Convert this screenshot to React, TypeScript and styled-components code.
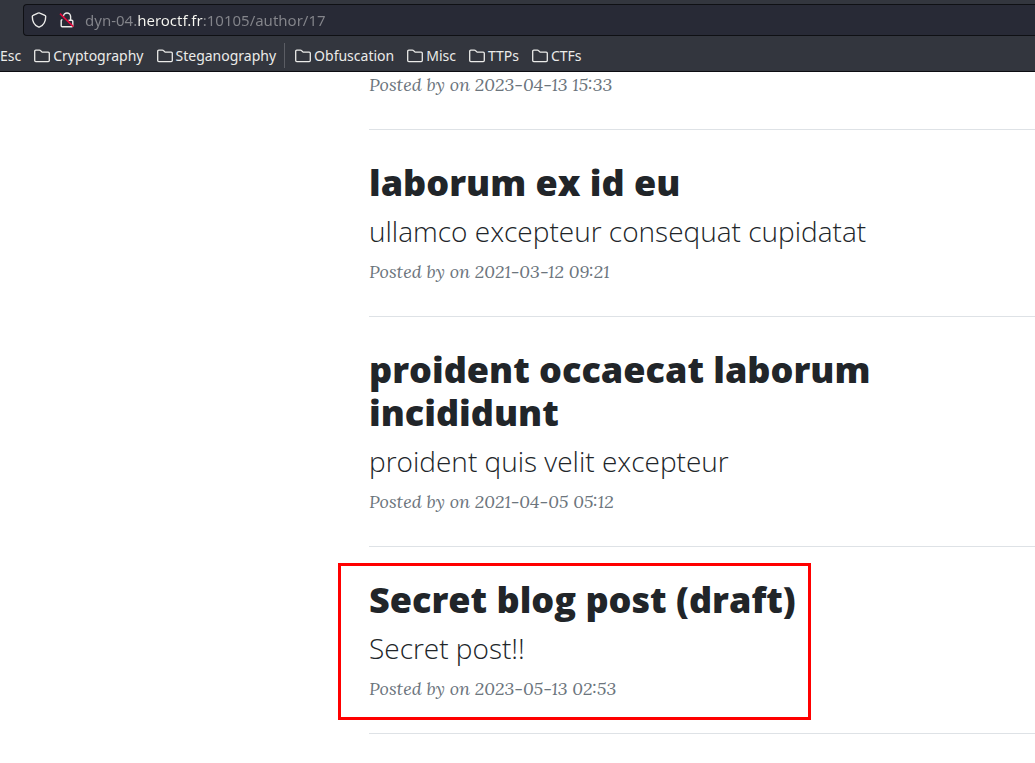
import React from "react";
import styled, { createGlobalStyle } from "styled-components";

const GlobalStyle = createGlobalStyle`
  *, *::before, *::after { box-sizing: border-box; }
  body {
    margin: 0;
    background: #fff;
    color: #212529;
    font-family: "Open Sans", "Noto Sans", sans-serif;
    overflow-x: hidden;
  }
`;

const BrowserBar = styled.header`
  background: #33363e;
  border-bottom: 1px solid #0c0c12;
  padding-top: 4px;
  font-family: "Noto Sans", sans-serif;
  overflow: hidden;
`;

const AddressBar = styled.div`
  display: flex;
  align-items: center;
  height: 32px;
  margin-left: 23px;
  padding-left: 7px;
  background: #282a36;
  border: 1px solid #0f1014;
  border-right: 0;
  border-radius: 4px 0 0 4px;
`;

const IconButton = styled.button`
  display: flex;
  flex: none;
  margin: 0 12px 0 0;
  padding: 0;
  border: 0;
  background: none;
  color: #ebebe9;
`;

const AddressInput = styled.input`
  flex: 1;
  min-width: 0;
  height: 30px;
  margin-left: -2px;
  padding: 0;
  border: 0;
  outline: 0;
  font: 15px/30px "Noto Sans", sans-serif;
  color: transparent;
  caret-color: #f8f8f2;
  background: linear-gradient(90deg, #84858b 52px, #f8f8f2 52px 118px, #84858b 118px);
  background-clip: text;
  -webkit-background-clip: text;
`;

const Bookmarks = styled.nav`
  display: flex;
  align-items: center;
  height: 35px;
  padding-top: 4px;
  gap: 13px;
`;

const Bookmark = styled.a`
  display: flex;
  align-items: center;
  flex: none;
  gap: 3px;
  color: #ebebe9;
  font-size: 14px;
  line-height: 20px;
  text-decoration: none;
`;

const Separator = styled.span`
  width: 1px;
  height: 25px;
  margin-right: -3px;
  margin-left: -5px;
  background: #5b5d64;
`;

const Page = styled.main`
  display: grid;
  grid-template-columns: 369fr 666fr;
`;

const Feed = styled.div`
  grid-column: 2;
`;

const Post = styled.article`
  border-bottom: 1px solid #dee2e6;
  padding-bottom: 31px;
`;

const PostBody = styled.div`
  position: relative;
  width: fit-content;
`;

const Highlight = styled.span`
  position: absolute;
  inset: 16px -15px -18px -31px;
  border: 3px solid #ff0000;
  pointer-events: none;
`;

const PostLink = styled.a`
  display: block;
  padding-top: 31px;
  color: inherit;
  text-decoration: none;
`;

const Title = styled.h2`
  margin: 0 0 10px;
  font-size: 36px;
  font-weight: 800;
  line-height: 43px;
`;

const Subtitle = styled.h3`
  margin: 0 0 11px;
  font-size: 28px;
  font-weight: 300;
  line-height: 34px;
`;

const Meta = styled.p`
  margin: 0;
  color: #6c757d;
  font: italic 18px/26px Lora, "Liberation Serif", serif;
`;

const ShieldIcon = () => (
  <svg width="16" height="16" viewBox="0 0 16 16" fill="none" stroke="currentColor" strokeWidth="1.4" strokeLinejoin="round" aria-hidden="true">
    <path d="M8 .9c.3 0 .6.1.8.2l5.1 2.2c.5.2.8.6.8 1.1 0 4.5-1.6 8.5-6 10.4a1.7 1.7 0 0 1-1.4 0c-4.4-1.9-6-5.9-6-10.4 0-.5.3-.9.8-1.1l4.9-2.2c.3-.1.6-.2 1-.2z" />
  </svg>
);

const InsecureIcon = () => (
  <svg width="16" height="16" viewBox="0 0 16 16" fill="none" aria-hidden="true">
    <path d="M4.4 4.6A3.6 3.6 0 0 1 11.6 4.6V8M3.4 7.7h-.2c-.6 0-1 .4-1 1v5c0 .6.4 1 1 1h9.6c.6 0 1-.4 1-1V9.2c0-.6-.4-1-1-1H9.5" stroke="#ebebe9" strokeWidth="1.4" />
    <path d="M1 1.6l13.4 13" stroke="#e5093d" strokeWidth="1.5" />
  </svg>
);

const FolderIcon = () => (
  <svg width="16" height="16" viewBox="0 0 16 16" fill="none" stroke="currentColor" strokeWidth="1.3" strokeLinejoin="round" aria-hidden="true">
    <path d="M.7 3.2c0-.6.5-1.1 1.1-1.1h3.6c.4 0 .7.1 1 .4l1.7 1.6h6.1c.6 0 1.1.5 1.1 1.1v7.4c0 .6-.5 1.1-1.1 1.1H1.8c-.6 0-1.1-.5-1.1-1.1z" />
  </svg>
);

const folders = ["Cryptography", "Steganography", "|", "Obfuscation", "Misc", "TTPs", "CTFs"];

interface PostData {
  title?: string;
  subtitle?: string;
  date: string;
  highlighted?: boolean;
}

const posts: PostData[] = [
  { date: "2023-04-13 15:33" },
  { title: "laborum ex id eu", subtitle: "ullamco excepteur consequat cupidatat", date: "2021-03-12 09:21" },
  { title: "proident occaecat laborum incididunt", subtitle: "proident quis velit excepteur", date: "2021-04-05 05:12" },
  { title: "Secret blog post (draft)", subtitle: "Secret post!!", date: "2023-05-13 02:53", highlighted: true },
];

export default function App() {
  return (
    <>
      <GlobalStyle />
      <BrowserBar>
        <AddressBar>
          <IconButton type="button" aria-label="Tracking protection"><ShieldIcon /></IconButton>
          <IconButton type="button" aria-label="Connection not secure"><InsecureIcon /></IconButton>
          <AddressInput aria-label="Address" defaultValue="dyn-04.heroctf.fr:10105/author/17" spellCheck={false} />
        </AddressBar>
        <Bookmarks aria-label="Bookmarks">
          <Bookmark href="#esc">Esc</Bookmark>
          {folders.map((name) =>
            name === "|" ? (
              <Separator key={name} />
            ) : (
              <Bookmark key={name} href={`#${name.toLowerCase()}`}>
                <FolderIcon />
                {name}
              </Bookmark>
            )
          )}
        </Bookmarks>
      </BrowserBar>
      <Page>
        <Feed>
          {posts.map((post) => (
            <Post key={post.date}>
              <PostBody>
                {post.title && (
                  <PostLink href="#post">
                    <Title>{post.title}</Title>
                    <Subtitle>{post.subtitle}</Subtitle>
                  </PostLink>
                )}
                <Meta>Posted by on {post.date}</Meta>
                {post.highlighted && <Highlight />}
              </PostBody>
            </Post>
          ))}
        </Feed>
      </Page>
    </>
  );
}
